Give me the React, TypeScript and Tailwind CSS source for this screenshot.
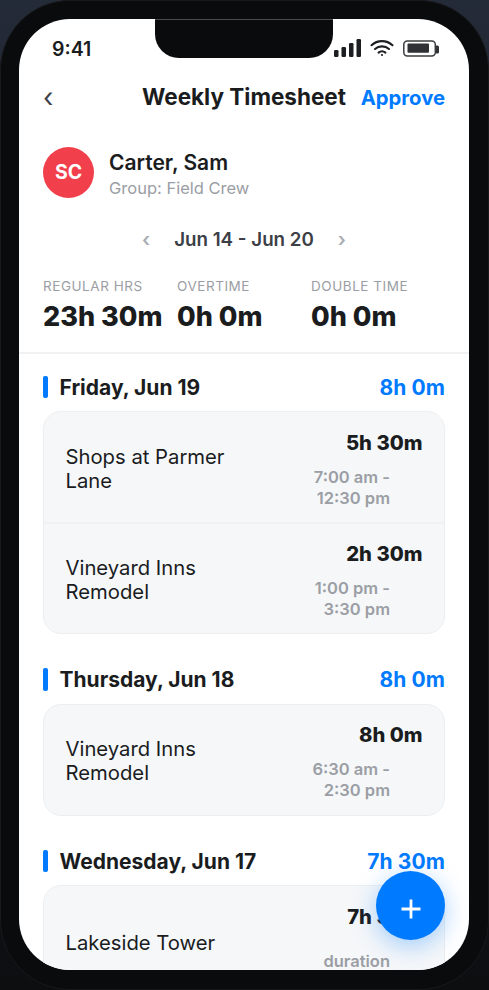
import { clsx } from "clsx";

type Entry = { project: string; hours: string; time: string[] };
type Day = { date: string; total: string; entries: Entry[] };

const totals = [
  { label: "Regular hrs", value: "23h 30m" },
  { label: "Overtime", value: "0h 0m" },
  { label: "Double time", value: "0h 0m" },
];

const days: Day[] = [
  {
    date: "Friday, Jun 19",
    total: "8h 0m",
    entries: [
      { project: "Shops at Parmer Lane", hours: "5h 30m", time: ["7:00 am -", "12:30 pm"] },
      { project: "Vineyard Inns Remodel", hours: "2h 30m", time: ["1:00 pm -", "3:30 pm"] },
    ],
  },
  {
    date: "Thursday, Jun 18",
    total: "8h 0m",
    entries: [
      { project: "Vineyard Inns Remodel", hours: "8h 0m", time: ["6:30 am -", "2:30 pm"] },
    ],
  },
  {
    date: "Wednesday, Jun 17",
    total: "7h 30m",
    entries: [{ project: "Lakeside Tower", hours: "7h 30m", time: ["duration"] }],
  },
];

function StatusIcons() {
  return (
    <svg width="106" height="20" viewBox="0 0 106 20" fill="none" className="text-[#1c1e21]">
      <g fill="currentColor">
        <rect x="0" y="11" width="4.5" height="7" rx="1.2" />
        <rect x="7.5" y="8" width="4.5" height="10" rx="1.2" />
        <rect x="15" y="4" width="4.5" height="14" rx="1.2" />
        <rect x="22.5" y="0" width="4.5" height="18" rx="1.2" />
      </g>
      <g stroke="currentColor" strokeWidth="2.1" strokeLinecap="round">
        <path d="M37.5 6.2a15.5 15.5 0 0 1 21 0" />
        <path d="M41 10a10.5 10.5 0 0 1 14 0" />
        <path d="M44.6 13.6a5.5 5.5 0 0 1 6.8 0" />
      </g>
      <circle cx="48" cy="16" r="1.1" fill="currentColor" />
      <rect x="69.8" y="2.1" width="31.5" height="15" rx="3.5" stroke="#3a3c3f" strokeWidth="1.5" />
      <rect x="73.5" y="4.5" width="21.5" height="9.2" rx="1" fill="#2f3134" />
      <path d="M102 6.5h1.5a1.5 1.5 0 0 1 1.5 1.5v5a1.5 1.5 0 0 1-1.5 1.5H102z" fill="#2f3134" />
    </svg>
  );
}

function DaySection({ day }: { day: Day }) {
  return (
    <section className="mb-[33.5px]">
      <div className="flex h-6 items-center justify-between text-[21px] leading-6">
        <div className="flex items-center gap-3">
          <span className="h-[22.5px] w-[4.5px] rounded-[2px] bg-[#007aff]" />
          <h2 className="pt-px font-bold">{day.date}</h2>
        </div>
        <span className="pt-px font-bold tracking-[0.1px] text-[#007aff]">{day.total}</span>
      </div>
      <div className="mt-3 overflow-hidden rounded-[18px] border border-[#eceef0] bg-[#f5f7f9]">
        {day.entries.map((entry, i) => (
          <div
            key={entry.project}
            className={clsx(
              "flex items-center justify-between px-[21.5px]",
              i > 0 ? "h-[111px] border-t-2 border-[#eff1f3]" : "h-[110px]"
            )}
          >
            <p className="w-[170px] pt-[3px] text-[20.25px] leading-6">{entry.project}</p>
            <div className="pt-[5.5px] text-right">
              <p className="text-[20.25px] font-extrabold leading-6">{entry.hours}</p>
              <div className="mt-3 flex h-[42px] flex-col justify-center pr-[32.5px] text-[16.5px] font-semibold leading-[21px] text-[#9b9ea4]">
                {entry.time.map((line) => (
                  <span key={line}>{line}</span>
                ))}
              </div>
            </div>
          </div>
        ))}
      </div>
    </section>
  );
}

export default function App() {
  return (
    <div className="h-[990px] w-[489px] overflow-hidden bg-linear-to-b from-[#242b38] to-[#0d0e10] font-['Inter',sans-serif] text-[#1a1c1e]">
      <div className="h-[990px] rounded-[70px] border border-[#18191b] bg-[#0a0b0d] pl-[18px] pr-[19px] pt-[18px]">
        <div className="relative flex h-[951px] flex-col overflow-hidden rounded-[51px] bg-white">
          <div className="absolute left-[136px] top-0 h-[39px] w-[177.5px] rounded-b-[24px] border-t border-[#4a4b4d] bg-[#0a0b0d]" />

          <div className="flex h-[60px] shrink-0 items-center justify-between pl-[33px] pr-[29px]">
            <span className="pt-0.5 text-[19.5px] font-semibold">9:41</span>
            <StatusIcons />
          </div>

          <header className="flex h-9 shrink-0 items-center px-6">
            <span className="w-[99px] pt-0.5 text-[27px] leading-9 text-[#3c4046]">‹</span>
            <h1 className="grow whitespace-nowrap text-[22.5px] font-bold leading-[34px]">Weekly Timesheet</h1>
            <span className="pt-px text-[20.25px] font-bold leading-[30px] text-[#007aff]">Approve</span>
          </header>

          <div className="mt-[31px] flex shrink-0 items-center gap-[15px] px-6">
            <div className="flex size-[51px] items-center justify-center rounded-full bg-[#f23f4c] pt-px text-[19.5px] font-bold text-white">
              SC
            </div>
            <div className="pt-[3px]">
              <p className="text-[21px] font-semibold leading-7">Carter, Sam</p>
              <p className="text-[16.5px] leading-[22px] text-[#9b9ea4]">Group: Field Crew</p>
            </div>
          </div>

          <div className="mt-[29px] flex h-6 shrink-0 items-center justify-center gap-6 text-[18.75px] font-semibold text-[#3c4046]">
            <span className="text-[19.5px] text-[#a9adb3]">‹</span>
            <span>Jun 14 - Jun 20</span>
            <span className="text-[19.5px] text-[#a9adb3]">›</span>
          </div>

          <div className="mt-[23px] grid shrink-0 grid-cols-3 border-b-2 border-[#eff1f2] px-6 pb-4">
            {totals.map(({ label, value }) => (
              <div key={label} className="whitespace-nowrap">
                <p className="text-[13.5px] uppercase leading-[22px] tracking-[0.55px] text-[#9b9ea4]">{label}</p>
                <p className="text-[27px] font-extrabold leading-[39px]">{value}</p>
              </div>
            ))}
          </div>

          <main className="px-6 pt-[21px]">
            {days.map((day) => (
              <DaySection key={day.date} day={day} />
            ))}
          </main>

          <button className="absolute bottom-[30px] right-6 flex size-[69px] items-center justify-center rounded-full bg-[#007aff] pt-[7px] text-white shadow-[0_6px_24px_rgba(0,122,255,0.35)]">
            <svg width="20" height="20" viewBox="0 0 20 20" stroke="currentColor" strokeWidth="2.8">
              <path d="M10 0.5v19M0.5 10h19" />
            </svg>
          </button>
        </div>
      </div>
    </div>
  );
}
